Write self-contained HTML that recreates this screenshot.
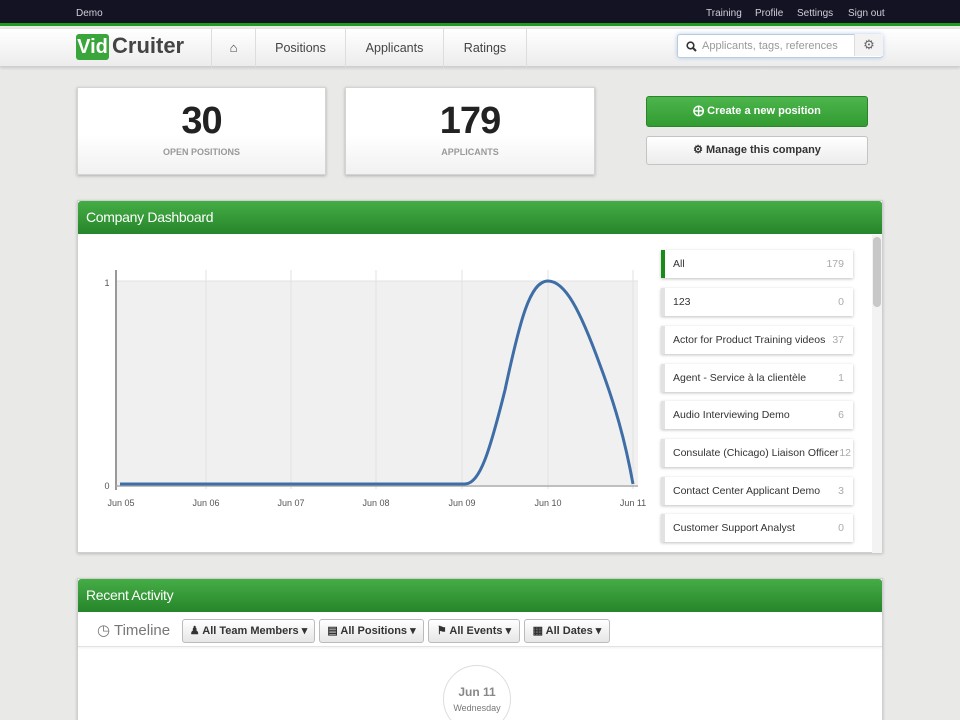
<!DOCTYPE html>
<html><head><meta charset="utf-8"><style>
*{box-sizing:border-box;margin:0;padding:0}
html,body{width:960px;height:720px;overflow:hidden}
body{background:#e9e9e7;font-family:"Liberation Sans",sans-serif;position:relative}
.abs{position:absolute}
.top{left:0;top:0;width:960px;height:26px;background:#131324;border-bottom:3px solid #1e9a1e}
.top span{position:absolute;top:8px;font-size:10px;color:#cfd0d8}
.nav{left:0;top:29px;width:960px;height:38px;background:linear-gradient(#fff,#ececec);border-bottom:1px solid #cfcfcf;box-shadow:0 1px 3px rgba(0,0,0,.15)}
.nav .it{position:absolute;top:0;height:38px;border-left:1px solid #ddd;font-size:12.5px;color:#444;line-height:38px;text-align:center}
.card{background:linear-gradient(#fff 55%,#f1f1f1);border:1px solid #d4d4d4;box-shadow:0 1px 3px rgba(0,0,0,.25);text-align:center}
.card b{display:block;font-size:38px;color:#222;margin-top:12px;letter-spacing:-1px}
.card i{display:block;font-style:normal;font-size:9px;font-weight:bold;color:#999;margin-top:4px}
.btn{border-radius:3px;font-size:11px;font-weight:bold;text-align:center}
.panel{background:#fff;border:1px solid #cfcfcf;box-shadow:0 1px 3px rgba(0,0,0,.2)}
.ph{height:33px;background:linear-gradient(#45ad45,#26852b);color:#fff;font-size:14px;line-height:33px;padding-left:8px;letter-spacing:-.3px;border-radius:3px 3px 0 0}
.li{position:absolute;left:661px;width:192px;height:28px;background:#fff;border-left:4px solid #e2e2e2;box-shadow:0 1px 3px rgba(0,0,0,.25);font-size:10.5px;color:#333;line-height:28px;padding-left:8px}
.li s{text-decoration:none;position:absolute;right:9px;color:#aaa}
.fb{position:absolute;top:619px;height:24px;border:1px solid #bbb;border-radius:3px;background:linear-gradient(#fff,#e6e6e6);font-size:11px;font-weight:bold;color:#333;line-height:22px;text-align:center}
</style></head><body>
<div class="abs top"><span style="left:76px">Demo</span><span style="left:706px">Training</span><span style="left:755px">Profile</span><span style="left:797px">Settings</span><span style="left:848px">Sign out</span></div>
<div class="abs nav">
 <div class="abs" style="left:76px;top:5px;height:26px;width:33px;background:#3aa53a;border-radius:3px;color:#fff;font-weight:bold;font-size:20px;line-height:26px;text-align:center">Vid</div>
 <div class="abs" style="left:112px;top:4px;font-weight:bold;font-size:22px;color:#444">Cruiter</div>
 <div class="it" style="left:211px;width:44px;font-size:13px;font-weight:bold">&#8962;</div>
 <div class="it" style="left:255px;width:90px">Positions</div>
 <div class="it" style="left:345px;width:98px">Applicants</div>
 <div class="it" style="left:443px;width:84px;border-right:1px solid #ddd">Ratings</div>
 <div class="abs" style="left:677px;top:5px;width:206px;height:24px;background:#fff;border:1px solid #bcd;border-radius:3px;box-shadow:0 0 4px rgba(80,140,220,.4);font-size:11px;color:#999;line-height:22px;padding-left:24px">Applicants, tags, references
  <svg class="abs" style="left:8px;top:6px" width="11" height="11" viewBox="0 0 11 11"><circle cx="4.5" cy="4.5" r="3.3" fill="none" stroke="#333" stroke-width="1.6"/><line x1="7" y1="7" x2="10" y2="10" stroke="#333" stroke-width="2"/></svg>
  <span class="abs" style="left:176px;top:-1px;width:29px;height:22px;border-left:1px solid #ddd;background:#f3f3f3;text-align:center;color:#666;font-size:13px">&#9881;</span></div>
</div>
<div class="abs card" style="left:77px;top:87px;width:249px;height:88px"><b>30</b><i>OPEN POSITIONS</i></div>
<div class="abs card" style="left:345px;top:87px;width:250px;height:88px"><b>179</b><i>APPLICANTS</i></div>
<div class="abs btn" style="left:646px;top:96px;width:222px;height:31px;background:linear-gradient(#4cb54c,#329b32);border:1px solid #2a852a;color:#fff;line-height:29px">&#10753; Create a new position</div>
<div class="abs btn" style="left:646px;top:136px;width:222px;height:29px;background:linear-gradient(#fff,#ececec);border:1px solid #c4c4c4;color:#333;line-height:27px">&#9881; Manage this company</div>
<div class="abs panel" style="left:77px;top:200px;width:806px;height:353px"><div class="ph">Company Dashboard</div>
 <div class="abs" style="left:794px;top:34px;width:10px;height:318px;background:#f3f3f3"><div style="margin:2px 1px;height:70px;background:#c8c8c8;border-radius:4px"></div></div>
</div>
<svg class="abs" style="left:0;top:0" width="960" height="720">
 <rect x="117" y="281" width="521" height="204" fill="#f0f0f0"/>
 <g stroke="#e2e2e2" stroke-width="1"><line x1="206" y1="270" x2="206" y2="489"/><line x1="291" y1="270" x2="291" y2="489"/><line x1="376" y1="270" x2="376" y2="489"/><line x1="462" y1="270" x2="462" y2="489"/><line x1="548" y1="270" x2="548" y2="489"/><line x1="633" y1="270" x2="633" y2="489"/><line x1="117" y1="281" x2="638" y2="281"/></g>
 <line x1="116" y1="270" x2="116" y2="490" stroke="#999" stroke-width="2"/>
 <line x1="116" y1="486" x2="638" y2="486" stroke="#aaa" stroke-width="1.5"/>
 <path d="M120 484 L465 484 C480 484 490 450 505 390 C520 320 530 281 548 281 C565 281 580 310 600 365 C615 405 625 440 633 484" fill="none" stroke="#3e6ea5" stroke-width="3"/>
 <g font-size="9" fill="#555" font-family="Liberation Sans,sans-serif" text-anchor="middle"><text x="107" y="286">1</text><text x="107" y="489">0</text>
 <text x="121" y="506">Jun 05</text><text x="206" y="506">Jun 06</text><text x="291" y="506">Jun 07</text><text x="376" y="506">Jun 08</text><text x="462" y="506">Jun 09</text><text x="548" y="506">Jun 10</text><text x="633" y="506">Jun 11</text></g>
</svg>
<div class="li" style="top:250px;border-left-color:#1a8a1a">All<s>179</s></div>
<div class="li" style="top:288px">123<s>0</s></div>
<div class="li" style="top:326px">Actor for Product Training videos<s>37</s></div>
<div class="li" style="top:364px">Agent - Service à la clientèle<s>1</s></div>
<div class="li" style="top:401px">Audio Interviewing Demo<s>6</s></div>
<div class="li" style="top:439px">Consulate (Chicago) Liaison Officer<s style="right:2px">12</s></div>
<div class="li" style="top:477px">Contact Center Applicant Demo<s>3</s></div>
<div class="li" style="top:514px">Customer Support Analyst<s>0</s></div>
<div class="abs panel" style="left:77px;top:578px;width:806px;height:160px"><div class="ph">Recent Activity</div>
 <div style="height:35px;border-bottom:1px solid #e2e2e2;box-shadow:0 1px 2px rgba(0,0,0,.06)"></div></div>
<div class="abs" style="left:97px;top:621px;font-size:15px;color:#777">&#9719; Timeline</div>
<div class="fb" style="left:182px;width:133px">&#9823; All Team Members &#9662;</div>
<div class="fb" style="left:319px;width:105px">&#9636; All Positions &#9662;</div>
<div class="fb" style="left:428px;width:92px">&#9873; All Events &#9662;</div>
<div class="fb" style="left:524px;width:86px">&#9638; All Dates &#9662;</div>
<div class="abs" style="left:443px;top:665px;width:68px;height:68px;border-radius:50%;background:#fff;border:1px solid #ddd;text-align:center"><div style="margin-top:19px;font-size:12px;font-weight:bold;color:#888">Jun 11</div><div style="font-size:9px;color:#777;margin-top:4px">Wednesday</div></div>
</body></html>
